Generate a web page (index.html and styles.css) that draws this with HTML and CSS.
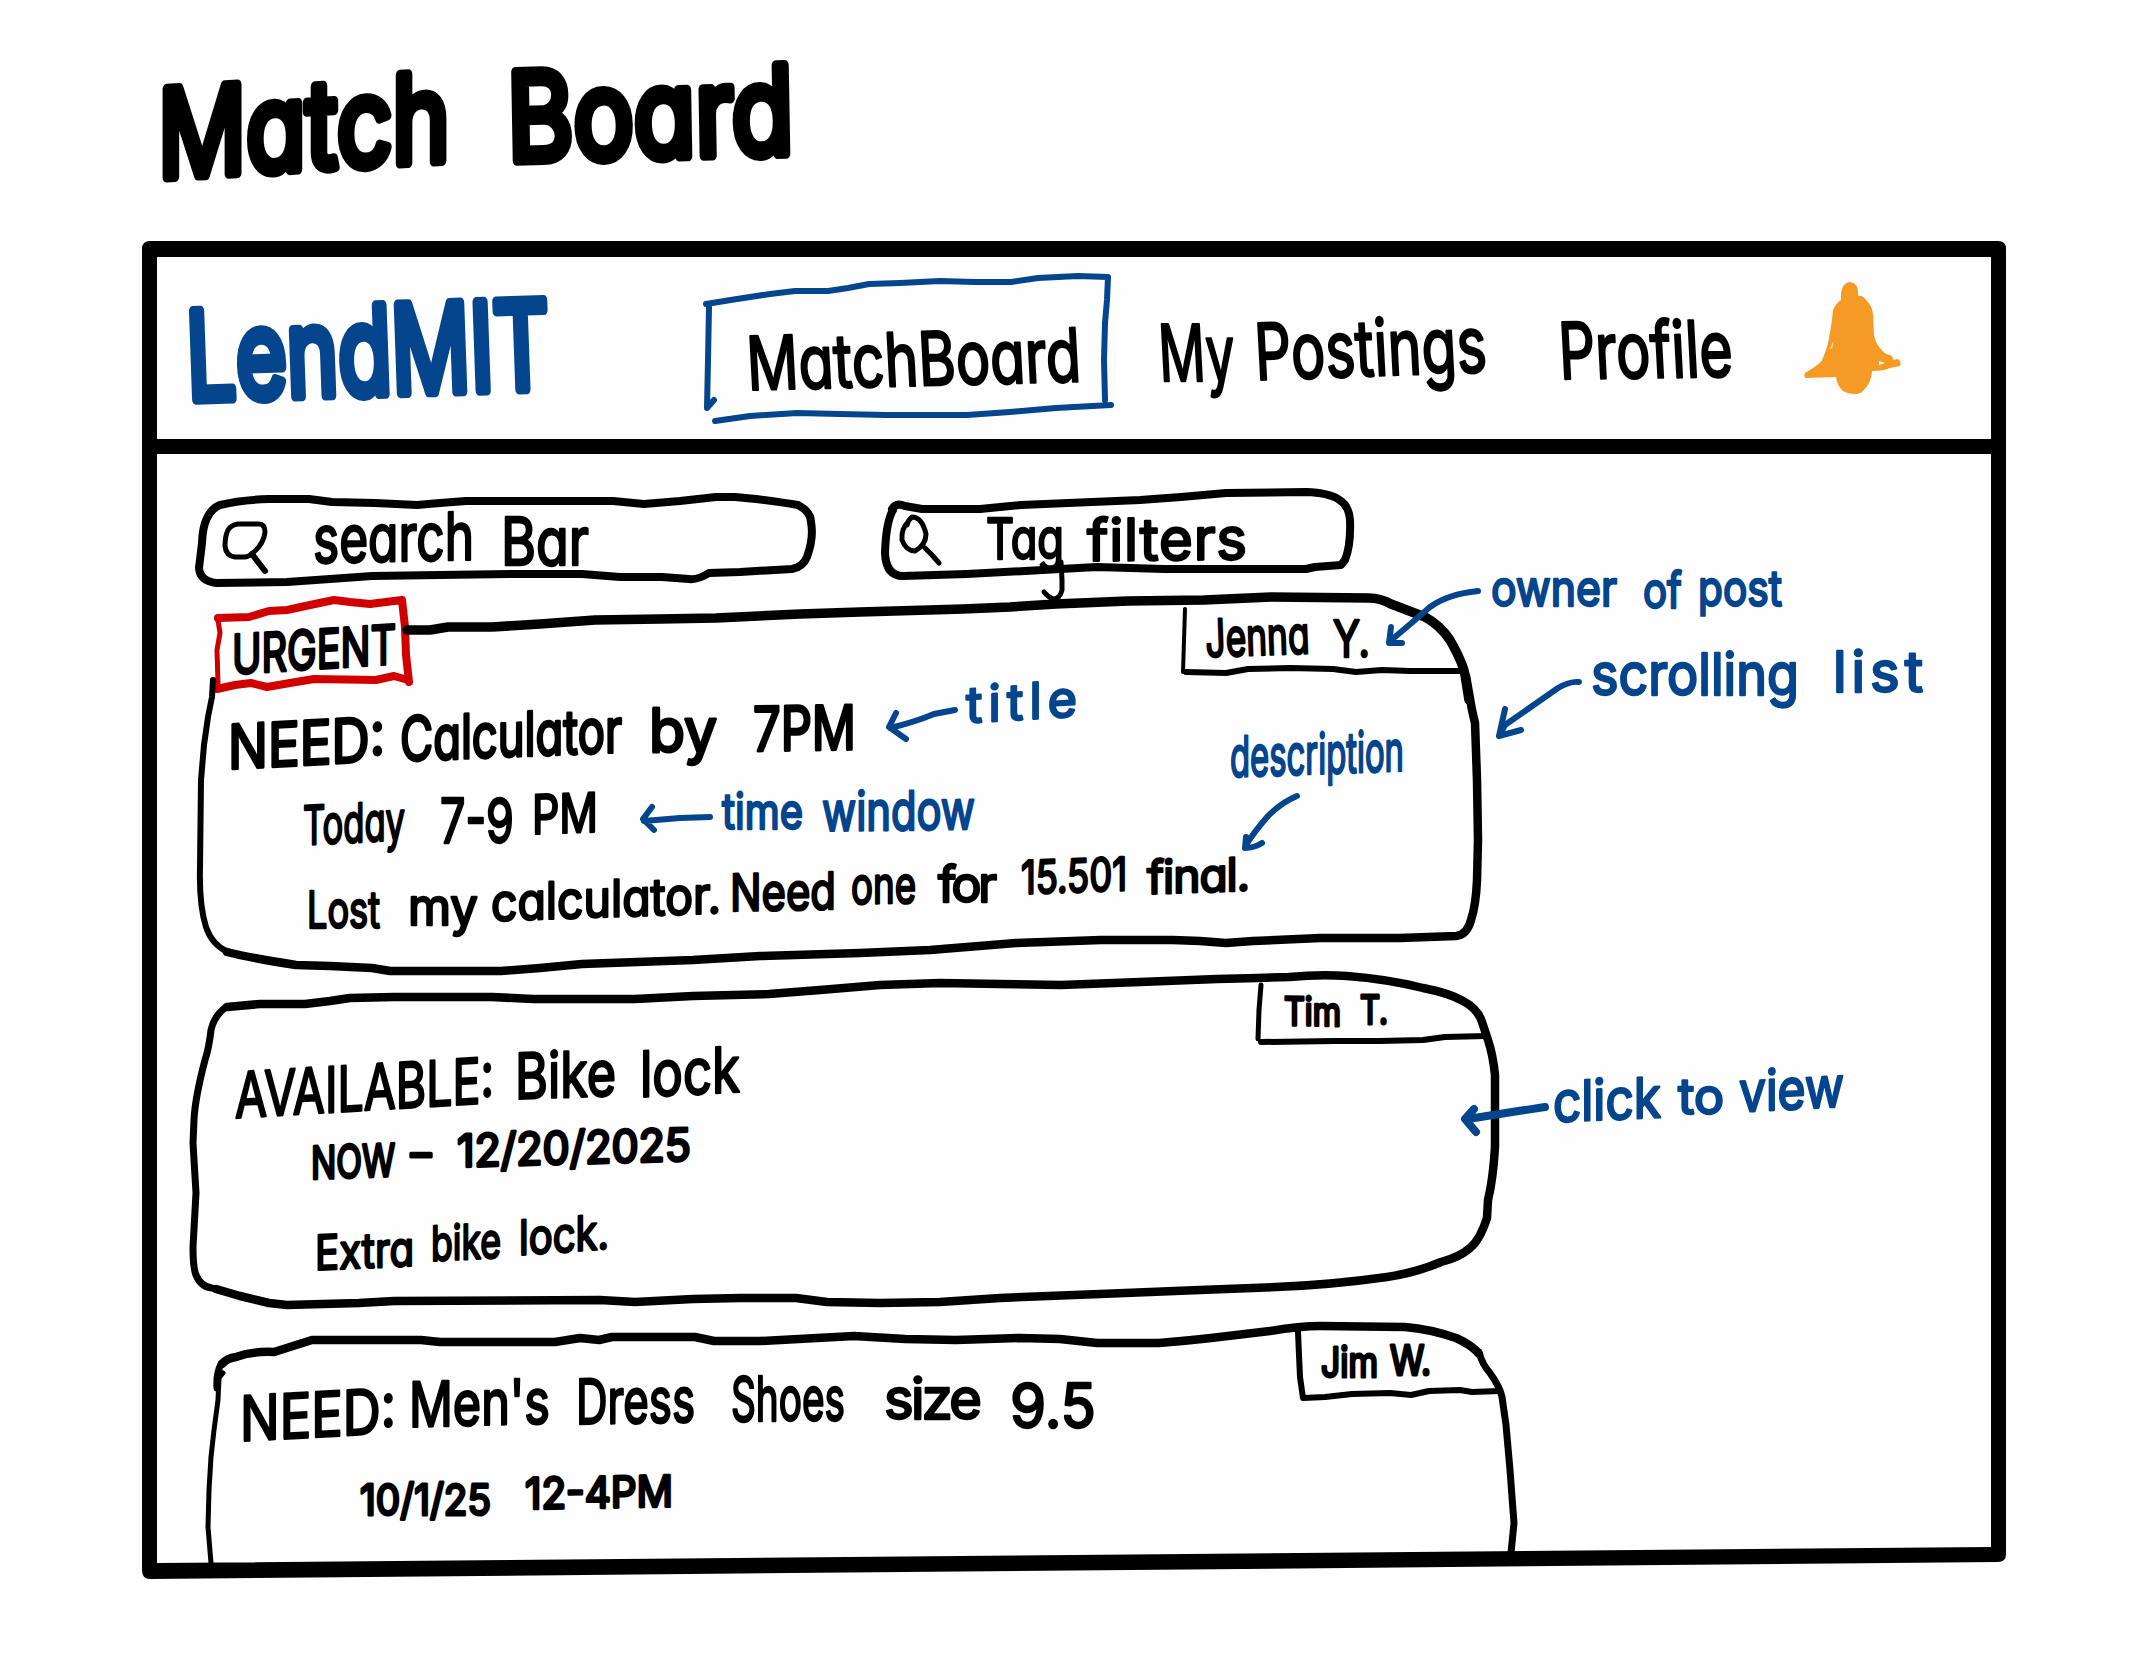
FILE: index.html
```html
<!DOCTYPE html>
<html lang="en">
<head>
<meta charset="utf-8">
<title>Match Board</title>
<link rel="stylesheet" href="styles.css">
</head>
<body>
<div class="page">
  <h1 class="page-title">
    <svg class="ink" width="700" height="201" viewBox="142 40 700 201">
      <g class="marker" font-size="122">
        <text textLength="292" lengthAdjust="spacingAndGlyphs" transform="translate(158 178) skewY(-3.4)">Match</text>
        <text textLength="286" lengthAdjust="spacingAndGlyphs" transform="translate(508 161) skewY(-1.5) skewX(1)">Board</text>
      </g>
    </svg>
  </h1>

  <div class="window">
    <svg class="outline" width="1864" height="1338" viewBox="142 241 1864 1338">
      <path class="frame" d="M150 241H1998Q2006 241 2006 249V1554Q2006 1562 1998 1562L150 1579Q142 1579 142 1570V249Q142 241 150 241ZM157 257V1563L1991 1547V257Z"/>
    </svg>

    <header class="topbar">
      <svg class="ink" width="543" height="182" viewBox="157 257 543 182">
        <text class="marker blue" font-size="122" textLength="363" lengthAdjust="spacingAndGlyphs" transform="translate(188 400) skewY(-1.8) skewX(2)">LendMIT</text>
      </svg>
      <nav class="nav">
        <svg class="ink" width="420" height="182" viewBox="700 257 420 182">
          <path class="line blue-line w6" d="M706 304L737 299L770 294L795 291L828 291L848 288L869 284L900 283L940 281L975 282L1011 282L1038 278L1078 276L1108 277L1107 300L1105 323L1104 360L1105 400M709 307L708 360L707 408L714 400M715 421L750 416L797 413L840 414L886 415L967 415L1010 412L1056 408L1111 405"/>
          <text class="pen" font-size="74" textLength="334" lengthAdjust="spacingAndGlyphs" transform="translate(748 390) skewY(-1.5) skewX(3)">MatchBoard</text>
        </svg>
        <svg class="ink" width="400" height="182" viewBox="1120 257 400 182">
          <g class="pen" font-size="78">
            <text textLength="76" lengthAdjust="spacingAndGlyphs" transform="translate(1160 381) skewX(3)">My</text>
            <text textLength="232" lengthAdjust="spacingAndGlyphs" transform="translate(1256 380) skewY(-2) skewX(3)">Postings</text>
          </g>
        </svg>
        <svg class="ink" width="260" height="182" viewBox="1520 257 260 182">
          <text class="pen" font-size="78" textLength="174" lengthAdjust="spacingAndGlyphs" transform="translate(1560 379) skewY(-.8) skewX(3)">Profile</text>
        </svg>
      </nav>
      <svg class="ink" width="211" height="182" viewBox="1780 257 211 182">
        <path class="bell" d="M1841 300V293Q1843 282 1850 282Q1858 283 1858 292V296Q1863 295 1867 301Q1872 306 1873 314L1874 335Q1875 342 1880 348Q1885 355 1890 355Q1893 356 1893 360L1898 359Q1902 362 1900 366L1890 368Q1884 371 1872 371Q1872 382 1863 391Q1860 394 1857 394Q1847 394 1843 391Q1837 386 1836 377L1806 378Q1803 376 1805 373Q1814 368 1821 362Q1827 350 1829 338Q1832 322 1833 310Q1836 303 1841 300ZM1833.500 341L1830 349.500L1832 348ZM1879 361L1885 363L1879 365Z"/>
      </svg>
    </header>

    <main class="board">
      <div class="filters">
        <svg class="ink" width="693" height="136" viewBox="157 454 693 136">
          <path class="line w8" d="M220 505Q240 500 269 499L309 499L332 502L375 503L417 505L440 503L466 501L613 501L644 504L680 501L716 497L735 497L756 499Q780 502 798 505Q811 512 811 522Q814 538 807 557Q803 567 792 569L740 572L709 573Q698 580 689 579L662 577L620 577L582 574L515 574L440 575L372 576L330 579L287 582L216 583Q200 581 199 568L202 543Q203 512 220 505"/>
          <path class="line w5" d="M238 524H259Q265 524 265 532Q264 543 254 552Q249 557 244 557H235Q226 556 225 546Q225 536 228 530Q231 525 238 524"/>
          <path class="line w6" d="M252 554L258 562L265 571"/>
          <g class="pen" font-size="66">
            <text textLength="161" lengthAdjust="spacingAndGlyphs" transform="translate(313 563) skewY(-1.2)">search</text>
            <text textLength="88" lengthAdjust="spacingAndGlyphs" transform="translate(501 565)">Bar</text>
          </g>
        </svg>
        <svg class="ink" width="550" height="136" viewBox="850 454 550 136">
          <path class="line w8" d="M892 509Q896 502 905 506L922 509L980 509L1021 505L1092 502L1140 500L1181 497L1226 493L1306 492Q1329 493 1338 499Q1349 505 1350 520Q1351 545 1345 560L1341 565L1315 567L1306 569L1222 569L1164 569L1097 567L1060 569L1025 571L967 574L903 576Q886 576 885 553Q886 522 893 510"/>
          <path class="line w5" d="M908 522Q901 529 902 540Q906 551 915 551Q926 545 926 534Q922 517 912 517Q908 520 907 525M925 548L932 555L939 563"/>
          <g class="pen">
            <text font-size="56" textLength="78" lengthAdjust="spacingAndGlyphs" transform="translate(986 559)">Tag</text>
            <text font-size="58" textLength="160" lengthAdjust="spacing" transform="translate(1087 561) skewY(-.7)">filters</text>
          </g>
          <path class="line w5" d="M1061 562L1062 580V590Q1060 599 1053 599Q1048 597 1044 592"/>
        </svg>
      </div>

      <section class="posts">
        <article class="card">
          <svg class="outline" width="1358" height="385" viewBox="157 590 1358 385">
            <path class="line w10" d="M407 630L430 630L448 627L492 627L540 624L595 620L660 619L716 618L800 614L860 612L963 609L1010 607L1056 604L1128 601L1204 600L1271 597L1369 598Q1380 598 1391 604L1425 617Q1440 625 1450 640Q1463 663 1465 675L1469 700"/>
            <path class="line w9" d="M1466 676L1472 710L1475 723L1477 780L1478 840L1477 880Q1476 905 1471 920Q1467 935 1456 936L1400 938L1320 938L1253 941L1226 943L1200 941L1173 940L1101 940L1016 943L930 950L860 953L760 956L693 960L582 964L540 968L501 971L390 971L372 968L330 966L296 965Q250 958 227 952"/>
            <path class="line w6" d="M228 952Q212 945 206 927Q199 905 200 867L201 780L204 745L208 717L212 697L213 680"/>
          </svg>
          <div class="card-head">
            <svg class="ink" width="543" height="105" viewBox="157 590 543 105">
              <path class="line red-line w8" d="M218 618L249 617L269 611L287 610L310 605L334 600L350 602L370 604L402 600L405 627L406 655L409 682M217 689L235 685L251 683L267 687L290 683L314 679L376 680L394 676L408 680"/>
              <path class="line red-line w5" d="M218 620L220 633L217 650L218 684"/>
              <text class="bold-pen" font-size="54" textLength="164" lengthAdjust="spacingAndGlyphs" transform="translate(232 674) skewY(-3.6)">URGENT</text>
            </svg>
            <svg class="ink" width="345" height="105" viewBox="1170 590 345 105">
              <path class="line w4" d="M1185 609L1184 640L1183 672L1200 672"/>
              <path class="line w6" d="M1186 672L1226 673L1248 669L1290 668L1333 669L1356 672L1382 670L1410 671L1463 671"/>
              <g class="pen">
                <text font-size="52" textLength="104" lengthAdjust="spacingAndGlyphs" transform="translate(1206 657) skewY(-2) skewX(2)">Jenna</text>
                <text font-size="50" textLength="37" lengthAdjust="spacingAndGlyphs" transform="translate(1333 657)">Y.</text>
              </g>
            </svg>
          </div>
          <svg class="ink" width="1358" height="95" viewBox="157 695 1358 95">
            <g class="bold-pen" font-size="61">
              <text textLength="157" lengthAdjust="spacingAndGlyphs" transform="translate(228 769) skewY(-3)">NEED:</text>
              <text textLength="222" lengthAdjust="spacingAndGlyphs" transform="translate(400 761) skewY(-2.300)">Calculator</text>
              <text textLength="68" lengthAdjust="spacingAndGlyphs" transform="translate(649 752)">by</text>
              <text textLength="103" lengthAdjust="spacingAndGlyphs" transform="translate(753 751) skewY(-1)">7PM</text>
            </g>
          </svg>
          <svg class="ink" width="1358" height="90" viewBox="157 790 1358 90">
            <g class="pen" font-size="54">
              <text textLength="102" lengthAdjust="spacingAndGlyphs" transform="translate(303 845) skewY(-3)">Today</text>
              <text font-size="62" textLength="74" lengthAdjust="spacingAndGlyphs" transform="translate(440 843)">7-9</text>
              <text textLength="66" lengthAdjust="spacingAndGlyphs" transform="translate(532 834) skewY(-2)">PM</text>
            </g>
          </svg>
          <svg class="ink" width="1358" height="95" viewBox="157 880 1358 95">
            <g class="pen" font-size="51">
              <text textLength="73" lengthAdjust="spacingAndGlyphs" transform="translate(307 928)">Lost</text>
              <text textLength="70" lengthAdjust="spacingAndGlyphs" transform="translate(408 925)">my</text>
              <text textLength="230" lengthAdjust="spacingAndGlyphs" transform="translate(491 921) skewY(-2)">calculator.</text>
              <text textLength="106" lengthAdjust="spacingAndGlyphs" transform="translate(730 911) skewY(-1)">Need</text>
              <text textLength="65" lengthAdjust="spacingAndGlyphs" transform="translate(851 904) skewY(-1)">one</text>
              <text font-size="50" textLength="59" lengthAdjust="spacing" transform="translate(938 902)">for</text>
              <text font-size="46" textLength="106" lengthAdjust="spacingAndGlyphs" transform="translate(1021 894) skewY(-2)">15.501</text>
              <text font-size="46" textLength="103" lengthAdjust="spacing" transform="translate(1147 894) skewY(-2)">final.</text>
            </g>
          </svg>
        </article>

        <article class="card">
          <svg class="outline" width="1358" height="335" viewBox="157 975 1358 335">
            <path class="line w9" d="M227 1007L260 1004L305 1004L330 1001L350 998L394 997L492 997L533 999L635 999L693 996L769 994L820 990L880 985L940 983L1000 984L1061 985L1140 982L1217 979L1258 978L1289 977Q1320 974 1347 976Q1387 979 1423 988Q1449 993 1463 1001Q1478 1009 1482 1022L1488 1040Q1493 1055 1495 1075L1495 1147Q1493 1180 1488 1200L1487 1218Q1480 1240 1470 1248Q1460 1257 1441 1262Q1415 1273 1387 1277Q1330 1285 1276 1287L1200 1290L1100 1294L1000 1298L940 1302L880 1303L827 1302L796 1298L740 1298L693 1299L635 1302L600 1300L394 1301L359 1303L287 1305L269 1303L240 1296L216 1289"/>
            <path class="line w7" d="M226 1007Q214 1016 211 1030Q209 1048 205 1060Q195 1098 194 1120L193 1143L196 1193L193 1247Q193 1268 196 1275Q201 1287 212 1288L222 1291"/>
          </svg>
          <div class="card-head">
            <svg class="ink" width="345" height="75" viewBox="1170 975 345 75">
              <path class="line w5" d="M1261 985L1259 1010L1258 1039"/>
              <path class="line w6" d="M1261 1042L1334 1041L1380 1041L1423 1040L1445 1037L1486 1036"/>
              <g class="bold-pen" font-size="39">
                <text textLength="57" lengthAdjust="spacingAndGlyphs" transform="translate(1284 1025) skewY(1)">Tim</text>
                <text textLength="28" lengthAdjust="spacingAndGlyphs" transform="translate(1360 1024)">T.</text>
              </g>
            </svg>
          </div>
          <svg class="ink" width="1358" height="75" viewBox="157 1050 1358 75">
            <g class="pen" font-size="63">
              <text textLength="259" lengthAdjust="spacingAndGlyphs" transform="translate(235 1118) skewY(-3.400)">AVAILABLE:</text>
              <text textLength="101" lengthAdjust="spacingAndGlyphs" transform="translate(515 1099) skewY(-2)">Bike</text>
              <text textLength="100" lengthAdjust="spacingAndGlyphs" transform="translate(640 1097) skewY(-3)">lock</text>
            </g>
          </svg>
          <svg class="ink" width="1358" height="75" viewBox="157 1125 1358 75">
            <g class="bold-pen" font-size="45">
              <text textLength="84" lengthAdjust="spacingAndGlyphs" transform="translate(311 1179) skewY(-2)">NOW</text>
              <text textLength="28" lengthAdjust="spacingAndGlyphs" transform="translate(407 1169)">-</text>
              <text textLength="234" lengthAdjust="spacingAndGlyphs" transform="translate(457 1167) skewY(-1.600)">12/20/2025</text>
            </g>
          </svg>
          <svg class="ink" width="1358" height="110" viewBox="157 1200 1358 110">
            <g class="pen" font-size="48">
              <text textLength="99" lengthAdjust="spacingAndGlyphs" transform="translate(315 1270) skewY(-2.500)">Extra</text>
              <text textLength="70" lengthAdjust="spacingAndGlyphs" transform="translate(431 1261) skewY(-3)">bike</text>
              <text textLength="90" lengthAdjust="spacingAndGlyphs" transform="translate(519 1255) skewY(-4)">lock.</text>
            </g>
          </svg>
        </article>

        <article class="card">
          <svg class="outline" width="1358" height="253" viewBox="157 1310 1358 253">
            <path class="line w9" d="M222 1364Q227 1358 236 1357Q252 1351 274 1352L293 1346L312 1340L421 1340L440 1342L555 1342L580 1338L599 1340L612 1337L695 1337L714 1341L760 1341L854 1336L905 1339L956 1340L1020 1338L1060 1339L1097 1343L1159 1343Q1185 1341 1211 1338L1270 1331Q1300 1326 1320 1326L1405 1327Q1430 1329 1456 1338Q1472 1345 1479 1354"/>
            <path class="line w7" d="M1479 1352Q1482 1364 1490 1373Q1500 1387 1502 1397L1506 1425L1510 1470L1513 1510L1514 1523L1511 1553M221 1364Q216 1374 217 1388"/>
            <path class="line w5" d="M223 1373L219 1378L218 1400L214 1430L211 1457L209 1490L208 1527L211 1563"/>
          </svg>
          <div class="card-head">
            <svg class="ink" width="345" height="70" viewBox="1170 1310 345 70">
              <path class="line w6" d="M1298 1332L1299 1355L1300 1377L1303 1398L1325 1397L1352 1394L1390 1393L1411 1395L1429 1391L1460 1390L1472 1392L1499 1391"/>
              <g class="bold-pen" font-size="41">
                <text textLength="57" lengthAdjust="spacingAndGlyphs" transform="translate(1321 1377)">Jim</text>
                <text textLength="41" lengthAdjust="spacingAndGlyphs" transform="translate(1390 1375)">W.</text>
              </g>
            </svg>
          </div>
          <svg class="ink" width="1358" height="75" viewBox="157 1380 1358 75">
            <g class="pen" font-size="62">
              <text textLength="156" lengthAdjust="spacingAndGlyphs" transform="translate(240 1441) skewY(-3)">NEED:</text>
              <text textLength="141" lengthAdjust="spacingAndGlyphs" transform="translate(409 1427) skewY(-1.500)">Men's</text>
              <text textLength="119" lengthAdjust="spacingAndGlyphs" transform="translate(576 1424) skewY(-1)">Dress</text>
              <text textLength="114" lengthAdjust="spacingAndGlyphs" transform="translate(731 1421)">Shoes</text>
              <text font-size="56" textLength="98" lengthAdjust="spacing" transform="translate(884 1419)">size</text>
              <text textLength="86" lengthAdjust="spacingAndGlyphs" transform="translate(1010 1428)">9.5</text>
            </g>
          </svg>
          <svg class="ink" width="1358" height="108" viewBox="157 1455 1358 108">
            <g class="bold-pen" font-size="43">
              <text textLength="131" lengthAdjust="spacingAndGlyphs" transform="translate(360 1515)">10/1/25</text>
              <text textLength="148" lengthAdjust="spacingAndGlyphs" transform="translate(525 1509) skewY(-1)">12-4PM</text>
            </g>
          </svg>
        </article>
      </section>
    </main>

    <svg class="outline" width="1864" height="1338" viewBox="142 241 1864 1338">
      <g class="pen blue" font-size="50">
        <text textLength="126" lengthAdjust="spacingAndGlyphs" transform="translate(1491 606)">owner</text>
        <text textLength="39" lengthAdjust="spacingAndGlyphs" transform="translate(1643 608)">of</text>
        <text textLength="84" lengthAdjust="spacingAndGlyphs" transform="translate(1698 606)">post</text>
        <text font-size="58" textLength="208" lengthAdjust="spacingAndGlyphs" transform="translate(1591 695)">scrolling</text>
        <text font-size="56" textLength="90" lengthAdjust="spacing" transform="translate(1833 692)">list</text>
        <text font-size="50" textLength="111" lengthAdjust="spacing" transform="translate(966 723) skewY(-3.500)">title</text>
        <text font-size="56" textLength="174" lengthAdjust="spacingAndGlyphs" transform="translate(1230 777) skewY(-2)">description</text>
        <text textLength="81" lengthAdjust="spacingAndGlyphs" transform="translate(722 829)">time</text>
        <text font-size="54" textLength="153" lengthAdjust="spacingAndGlyphs" transform="translate(822 831) skewY(-.7)">window</text>
        <text font-size="56" textLength="108" lengthAdjust="spacingAndGlyphs" transform="translate(1553 1122) skewY(-2.500)">click</text>
        <text textLength="46" lengthAdjust="spacingAndGlyphs" transform="translate(1678 1114)">to</text>
        <text font-size="56" textLength="105" lengthAdjust="spacingAndGlyphs" transform="translate(1739 1112) skewY(-3)">view</text>
      </g>
      <path class="line blue-line w6" d="M1478 591Q1448 594 1430 607L1408 626L1389 642M1391 627L1389 643L1402 643M1579 682Q1570 681 1558 688L1505 725L1499 736M1505 709L1499 736L1521 730M955 710L934 714Q915 722 890 728M896 713L889 727L906 739M1297 796Q1282 802 1268 816Q1254 832 1246 845M1246 837L1245 848Q1254 848 1262 843M710 817L680 818L644 821M652 807L643 819L654 830"/>
      <path class="line blue-line w8" d="M1545 1107L1512 1112L1468 1119M1474 1109L1465 1119L1476 1132"/>
    </svg>
  </div>
</div>
</body>
</html>
```
FILE: styles.css
```css
body {
  margin: 0;
  background: #fefefe;
  font-family: Inter, "Liberation Sans", sans-serif;
}

.page {
  box-sizing: border-box;
  width: 2154px;
  height: 1668px;
  padding: 40px 0 0 142px;
  overflow: hidden;
}

.page-title {
  margin: 0;
  font-weight: 400;
}

.window {
  position: relative;
  box-sizing: border-box;
  width: 1864px;
  height: 1338px;
  padding: 16px 15px;
}

.topbar {
  display: flex;
  border-bottom: 15px solid #000;
}

.nav,
.filters {
  display: flex;
}

.posts {
  display: flex;
  flex-direction: column;
  width: 1358px;
}

.card {
  position: relative;
  display: flex;
  flex-direction: column;
}

.card-head {
  display: flex;
}

.card-head .ink:last-child {
  margin-left: auto;
}

.ink {
  display: block;
  overflow: visible;
  flex: none;
}

.outline {
  position: absolute;
  top: 0;
  left: 0;
  overflow: visible;
  pointer-events: none;
}

/* Lettering */
.marker,
.pen,
.bold-pen {
  fill: #000;
  stroke: #000;
  stroke-linejoin: round;
  font-feature-settings: "cv11";
  font-weight: 400;
}

.marker { stroke-width: 10px; }
.pen { stroke-width: 2.4px; }
.bold-pen { stroke-width: 3px; }

.blue {
  fill: #04458d;
  stroke: #04458d;
}

/* Drawn strokes */
.line {
  fill: none;
  stroke: #000;
  stroke-linecap: round;
  stroke-linejoin: round;
}

.blue-line { stroke: #04458d; }
.red-line { stroke: #d00000; }

.w4 { stroke-width: 4px; }
.w5 { stroke-width: 5px; }
.w6 { stroke-width: 6px; }
.w7 { stroke-width: 7px; }
.w8 { stroke-width: 8px; }
.w9 { stroke-width: 8.5px; }
.w10 { stroke-width: 9.5px; }

.frame { fill: #000; fill-rule: evenodd; }
.bell { fill: #f59b25; fill-rule: evenodd; }
```
